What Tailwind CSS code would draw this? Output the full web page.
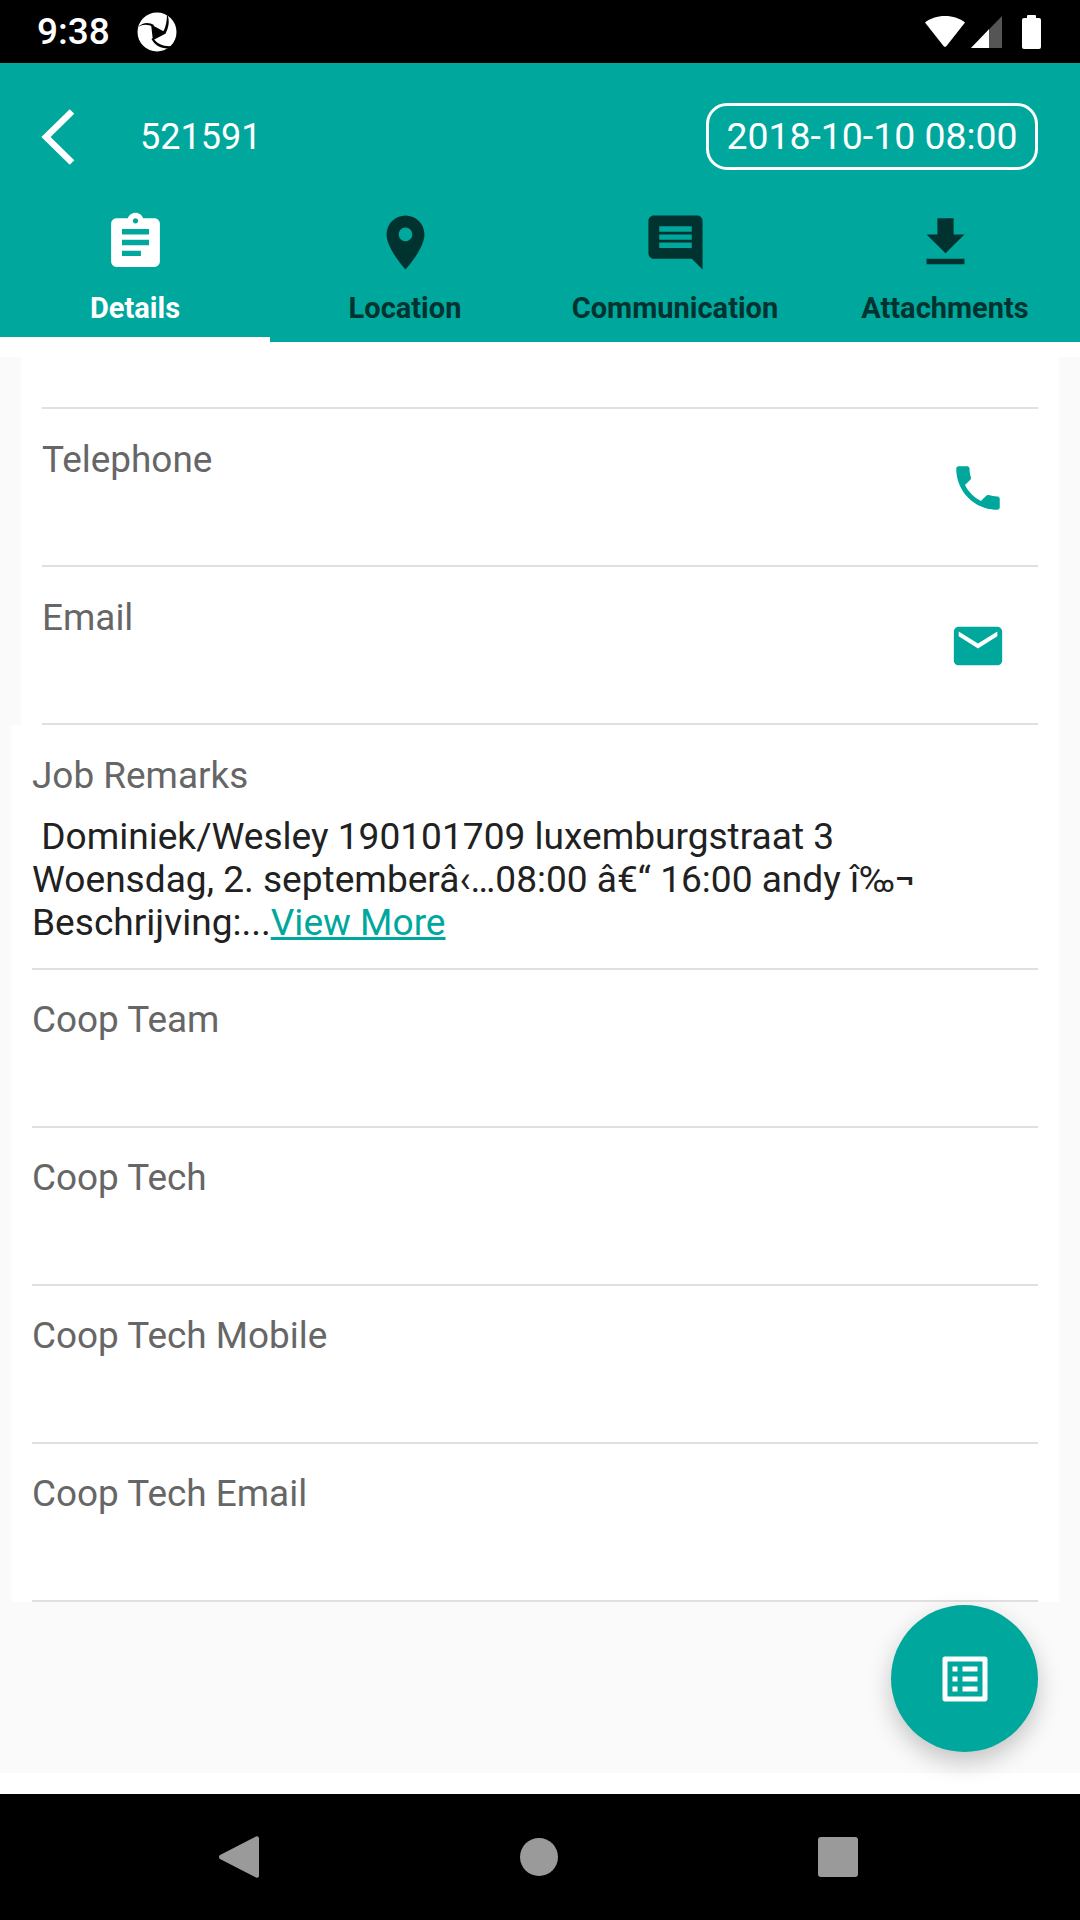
<!DOCTYPE html>
<html lang="en">
  <head>
    <meta charset="UTF-8" />
    <meta name="viewport" content="width=device-width, initial-scale=1.0" />
    <title>Job details</title>
    <script src="https://cdn.jsdelivr.net/npm/@tailwindcss/browser@4"></script>
  </head>
  <body class="bg-white font-[Roboto,sans-serif]">
    <div class="relative w-[1080px] h-[1920px] flex flex-col overflow-hidden bg-white">
      <!-- Status bar -->
      <div class="h-[63px] bg-black flex items-center text-white pl-[37px] pr-[39px]">
        <span class="text-[37px] font-medium leading-none">9:38</span>
        <svg class="ml-[27px] w-[40px] h-[40px]" viewBox="0 0 40 40">
          <circle cx="20" cy="20" r="19.500" fill="#fff" />
          <path d="M15 14L28 21L16.500 27z" fill="#000" stroke="#000" stroke-width="1.500" stroke-linejoin="round" />
          <path d="M1 15C6 10 12 10 17 13L16 15C11 12 6 12 1 15z" fill="#000" />
          <path d="M30 2C33 8 32 16 28 22L26 20C29 15 30 8 30 2z" fill="#000" />
          <path d="M16 26C20 32 27 35 36 34L35 36C26 38 18 34 14.500 27z" fill="#000" />
        </svg>
        <div class="flex-1"></div>
        <svg class="w-[40px] h-[31px]" viewBox="0 0 40 31"><path d="M20 0C12 0 5 2.500 0 6.500L18.500 30a2 2 0 0 0 3 0L40 6.500C35 2.500 28 0 20 0z" fill="#fff" /></svg>
        <svg class="ml-[6px] w-[31px] h-[32px]" viewBox="0 0 31 32">
          <path d="M31 0V32H0z" fill="#555" />
          <path d="M18 13.300V32H0z" fill="#fff" />
        </svg>
        <div class="ml-[20px] w-[19px] h-[34px] flex flex-col items-center">
          <div class="w-[9px] h-[3px] bg-white rounded-t-[1px]"></div>
          <div class="w-[19px] flex-1 bg-white rounded-[2px]"></div>
        </div>
      </div>

      <!-- Header -->
      <div class="h-[279px] bg-[#00a79d] flex flex-col">
        <div class="h-[147px] flex items-center pr-[42px]">
          <svg class="ml-[41px] w-[34px] h-[56px]" viewBox="0 0 34 56" fill="none">
            <path d="M31 2.500 L5 28 L31 53.500" stroke="#fff" stroke-width="6.500" />
          </svg>
          <span class="ml-[65px] text-[36px] leading-none text-white">521591</span>
          <div class="flex-1"></div>
          <div class="w-[332px] h-[67px] border-[3px] border-white rounded-[21px] flex items-center justify-center text-[37.400px] leading-none text-white">2018-10-10 08:00</div>
        </div>
        <div class="flex-1 grid grid-cols-4 text-[29px] font-bold text-[#00332f]">
          <div class="flex flex-col items-center border-b-[5px] border-white text-white">
            <svg class="w-[65px] h-[65px]" viewBox="0 0 24 24" fill="currentColor"><path d="M19 3h-4.180C14.400 1.840 13.300 1 12 1c-1.300 0-2.400.840-2.820 2H5c-1.100 0-2 .900-2 2v14c0 1.100.900 2 2 2h14c1.100 0 2-.900 2-2V5c0-1.100-.900-2-2-2zm-7 0c.550 0 1 .450 1 1s-.450 1-1 1-1-.450-1-1 .450-1 1-1zm2 14H7v-2h7v2zm3-4H7v-2h10v2zm0-4H7V7h10v2z" /></svg>
            <span class="mt-[17px] leading-[32px]">Details</span>
          </div>
          <div class="flex flex-col items-center">
            <svg class="w-[65px] h-[65px]" viewBox="0 0 24 24" fill="currentColor"><path d="M12 2C8.130 2 5 5.130 5 9c0 5.250 7 13 7 13s7-7.750 7-13c0-3.870-3.130-7-7-7zm0 9.500c-1.380 0-2.500-1.120-2.500-2.500s1.120-2.500 2.500-2.500 2.500 1.120 2.500 2.500-1.120 2.500-2.500 2.500z" /></svg>
            <span class="mt-[17px] leading-[32px]">Location</span>
          </div>
          <div class="flex flex-col items-center">
            <svg class="w-[65px] h-[65px]" viewBox="0 0 24 24" fill="currentColor"><path d="M21.990 4c0-1.100-.890-2-1.990-2H4c-1.100 0-2 .900-2 2v12c0 1.100.900 2 2 2h14l4 4-.010-18zM18 14H6v-2h12v2zm0-3H6V9h12v2zm0-3H6V6h12v2z" /></svg>
            <span class="mt-[17px] leading-[32px]">Communication</span>
          </div>
          <div class="flex flex-col items-center">
            <svg class="w-[65px] h-[65px]" viewBox="0 0 24 24" fill="currentColor"><path d="M19 9h-4V3H9v6H5l7 7 7-7zM5 18v2h14v-2H5z" /></svg>
            <span class="mt-[17px] leading-[32px]">Attachments</span>
          </div>
        </div>
      </div>

      <!-- Content -->
      <div class="mt-[15px] h-[1416px] bg-[#fafafa] pr-[21px] text-[36.900px] text-[#666666]">
        <div class="ml-[21px] bg-white">
          <div class="h-[52px] mx-[21px] border-b-2 border-[#e0e0e0]"></div>
          <div class="h-[158px] mx-[21px] border-b-2 border-[#e0e0e0] flex items-center">
            <div class="flex-1 self-start pt-[29px] leading-[43px]">Telephone</div>
            <svg class="w-[58px] h-[58px] mr-[31px] mt-[2px]" viewBox="0 0 24 24" fill="#00a79d"><path d="M6.620 10.790c1.440 2.830 3.760 5.140 6.590 6.590l2.200-2.200c.270-.270.670-.360 1.020-.240 1.120.370 2.330.570 3.570.570.550 0 1 .450 1 1V20c0 .550-.450 1-1 1-9.390 0-17-7.610-17-17 0-.550.450-1 1-1h3.500c.550 0 1 .450 1 1 0 1.250.200 2.450.570 3.570.110.350.030.740-.250 1.020l-2.200 2.200z" /></svg>
          </div>
          <div class="h-[158px] mx-[21px] border-b-2 border-[#e0e0e0] flex items-center">
            <div class="flex-1 self-start pt-[29px] leading-[43px]">Email</div>
            <svg class="w-[58px] h-[58px] mr-[31px] mt-[2px]" viewBox="0 0 24 24" fill="#00a79d"><path d="M20 4H4c-1.100 0-1.990.900-1.990 2L2 18c0 1.100.900 2 2 2h16c1.100 0 2-.900 2-2V6c0-1.100-.900-2-2-2zm0 4l-8 5-8-5V6l8 5 8-5v2z" /></svg>
          </div>
        </div>
        <div class="ml-[11px] bg-white px-[21px]">
          <div class="border-b-2 border-[#e0e0e0] pb-[24px] pt-[29px]">
            <div class="leading-[43px]">Job Remarks</div>
            <div class="mt-[18px] leading-[43px] text-[37.100px] text-[#212121] whitespace-pre">&nbsp;Dominiek/Wesley 190101709 luxemburgstraat 3<br />Woensdag, 2. septemberâ‹…08:00 â€“ 16:00 andy î‰¬<br />Beschrijving:...<a class="text-[#00a79d] underline">View More</a></div>
          </div>
          <div class="h-[158px] border-b-2 border-[#e0e0e0] pt-[28px] leading-[43px]">Coop Team</div>
          <div class="h-[158px] border-b-2 border-[#e0e0e0] pt-[28px] leading-[43px]">Coop Tech</div>
          <div class="h-[158px] border-b-2 border-[#e0e0e0] pt-[28px] leading-[43px]">Coop Tech Mobile</div>
          <div class="h-[158px] border-b-2 border-[#e0e0e0] pt-[28px] leading-[43px]">Coop Tech Email</div>
        </div>
      </div>

      <!-- Gap above nav -->
      <div class="h-[21px] bg-white"></div>

      <!-- Nav bar -->
      <div class="h-[126px] bg-black relative">
        <svg class="absolute left-[219px] top-[41px] w-[40px] h-[44px]" viewBox="0 0 40 44"><path d="M37 1.500 a2 2 0 0 1 3 1.500 V41 a2 2 0 0 1-3 1.500 L1 24 a2.500 2.500 0 0 1 0-4z" fill="#9a9a9a" /></svg>
        <div class="absolute left-[520px] top-[44px] w-[38px] h-[38px] rounded-full bg-[#9a9a9a]"></div>
        <div class="absolute left-[818px] top-[43px] w-[40px] h-[40px] rounded-[3px] bg-[#9a9a9a]"></div>
      </div>

      <!-- FAB -->
      <div class="absolute left-[891px] top-[1605px] w-[147px] h-[147px] rounded-full bg-[#00a79d] shadow-[0_10px_24px_rgba(0,0,0,0.22)] flex items-center justify-center">
        <svg class="w-[60px] h-[60px]" viewBox="0 0 24 24" fill="#fff"><path d="M11 7h6v2h-6zm0 4h6v2h-6zm0 4h6v2h-6zM7 7h2v2H7zm0 4h2v2H7zm0 4h2v2H7zM20.100 3H3.900c-.500 0-.900.400-.900.900v16.200c0 .400.400.900.900.900h16.200c.400 0 .900-.500.900-.900V3.900c0-.500-.500-.900-.900-.900zM19 19H5V5h14v14z" /></svg>
      </div>
    </div>
  </body>
</html>
